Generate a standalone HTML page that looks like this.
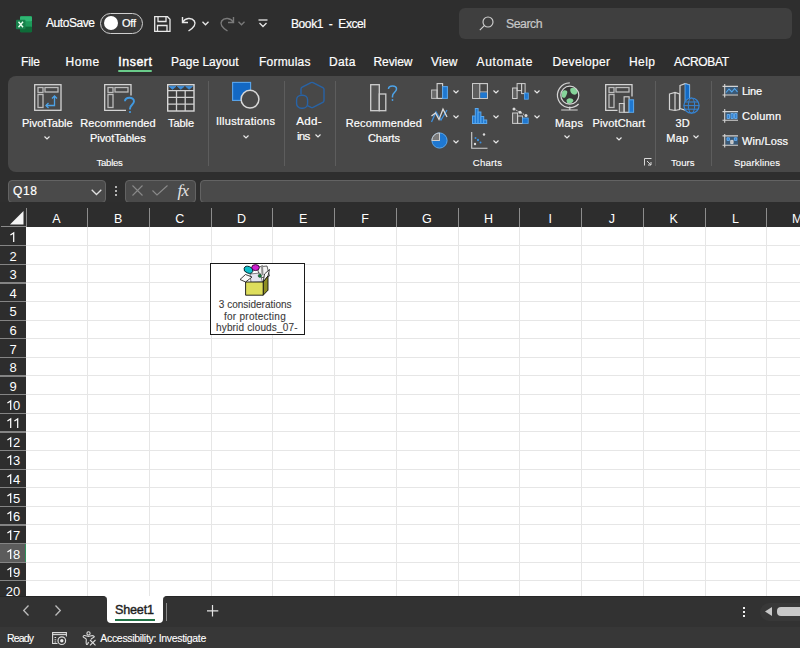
<!DOCTYPE html>
<html><head><meta charset="utf-8">
<style>
*{margin:0;padding:0;box-sizing:border-box}
html,body{width:800px;height:648px;overflow:hidden;background:#2e2e2e;font-family:"Liberation Sans",sans-serif;color:#fff;position:relative}
.a{position:absolute;white-space:nowrap}
svg{position:absolute;overflow:visible}
.rh{left:0;width:26px;font-size:13px;color:#fff;text-align:center}
.rh span{position:absolute;left:0;right:0;top:4px;line-height:13px}
.one{display:inline-block;width:7.2px;height:13px;position:relative;vertical-align:top}
.one svg{position:absolute;left:0;top:0}
.ch{top:212px;font-size:12.5px;line-height:14px;text-align:center;color:#fff}
</style></head><body>

<!-- ===== TITLE BAR ===== -->
<!-- excel logo -->
<svg style="left:16px;top:15.5px" width="17" height="17" viewBox="0 0 17 17">
  <rect x="4" y="0.3" width="12" height="16" rx="1.2" fill="#107c41"/>
  <rect x="4" y="0.3" width="12" height="5.5" rx="1.2" fill="#2fb673"/>
  <rect x="4" y="5.5" width="12" height="5.3" fill="#1d9a5a"/>
  <rect x="4" y="10.8" width="12" height="5.5" rx="1.2" fill="#0e6b38"/>
  <rect x="0" y="3.8" width="9.5" height="9.5" rx="1" fill="#17804a"/>
  <path d="M2.5 5.8 L7 11.3 M7 5.8 L2.5 11.3" stroke="#eafff0" stroke-width="1.4"/>
</svg>
<!-- toggle -->
<div class="a" style="left:100px;top:13px;width:43px;height:20.5px;background:#383838;border:1.4px solid #cfcfcf;border-radius:11px"></div>
<div class="a" style="left:103.7px;top:16.2px;width:14px;height:14px;background:#fff;border-radius:50%"></div>
<!-- save -->
<svg style="left:154px;top:16px" width="17" height="16" viewBox="0 0 17 16" fill="none" stroke="#e8e8e8" stroke-width="1.3">
  <path d="M0.7 0.7 H13.5 L16 3.2 V15.3 H0.7 Z"/>
  <path d="M4 0.7 V5.5 H12 V0.7"/>
  <path d="M3.5 15.3 V9.5 H13 V15.3"/>
</svg>
<!-- undo -->
<svg style="left:181px;top:16px" width="18" height="16" viewBox="0 0 18 16" fill="none" stroke="#e8e8e8" stroke-width="1.4">
  <path d="M1.5 1 V6.5 H7"/>
  <path d="M1.8 6.3 C4 2 10.5 1 13.3 5 C15.3 8 13 11.5 7.5 15"/>
</svg>
<svg style="left:202px;top:21px" width="7" height="5" viewBox="0 0 7 5" fill="none" stroke="#e8e8e8" stroke-width="1.3"><path d="M0.5 0.8 L3.5 3.8 L6.5 0.8"/></svg>
<!-- redo -->
<svg style="left:217px;top:16px" width="18" height="16" viewBox="0 0 18 16" fill="none" stroke="#7a7a7a" stroke-width="1.4">
  <path d="M16.5 1 V6.5 H11"/>
  <path d="M16.2 6.3 C14 2 7.5 1 4.7 5 C2.7 8 5 11.5 10.5 15"/>
</svg>
<svg style="left:238px;top:21px" width="7" height="5" viewBox="0 0 7 5" fill="none" stroke="#7a7a7a" stroke-width="1.3"><path d="M0.5 0.8 L3.5 3.8 L6.5 0.8"/></svg>
<!-- customize qat -->
<svg style="left:258px;top:19px" width="10" height="9" viewBox="0 0 10 9" fill="none" stroke="#e8e8e8" stroke-width="1.3">
  <path d="M0.5 1 H9.5"/><path d="M1.5 4 L5 7.5 L8.5 4"/>
</svg>
<!-- search box -->
<div class="a" style="left:459px;top:8px;width:333px;height:31px;background:#3f3f3f;border-radius:6px"></div>
<svg style="left:479px;top:15.5px" width="15" height="15" viewBox="0 0 15 15" fill="none" stroke="#cfcfcf" stroke-width="1.15">
  <circle cx="9" cy="6" r="5"/><path d="M5.3 9.7 L0.8 14.2"/>
</svg>

<!-- insert underline -->
<div class="a" style="left:118px;top:70px;width:34px;height:2.4px;background:#6acb8a;border-radius:1.2px"></div>

<!-- ===== RIBBON ===== -->
<div class="a" style="left:8px;top:76px;width:830px;height:96px;background:#484848;border-radius:8px"></div>
<div class="a" style="left:208px;top:81px;width:1px;height:85px;background:#5d5d5d"></div>
<div class="a" style="left:283.5px;top:81px;width:1px;height:85px;background:#5d5d5d"></div>
<div class="a" style="left:334.5px;top:81px;width:1px;height:85px;background:#5d5d5d"></div>
<div class="a" style="left:655px;top:81px;width:1px;height:85px;background:#5d5d5d"></div>
<div class="a" style="left:710.5px;top:81px;width:1px;height:85px;background:#5d5d5d"></div>

<!-- PivotTable icon -->
<svg style="left:34px;top:84px" width="28" height="27" viewBox="0 0 28 27" fill="none">
  <rect x="0.7" y="0.7" width="26.3" height="25.6" stroke="#d4d4d4" stroke-width="1.3"/>
  <rect x="4" y="3.5" width="5" height="5" stroke="#bcbcbc" stroke-width="1.3"/>
  <rect x="11" y="3.5" width="13" height="4.5" stroke="#bcbcbc" stroke-width="1.3"/>
  <rect x="4" y="10.5" width="5" height="13" stroke="#bcbcbc" stroke-width="1.3"/>
  <path d="M12 21.5 H20.5 V12" stroke="#4da3e8" stroke-width="1.3"/>
  <path d="M14.5 19 L12 21.5 L14.5 24" stroke="#4da3e8" stroke-width="1.3"/>
  <path d="M18 14.5 L20.5 12 L23 14.5" stroke="#4da3e8" stroke-width="1.3"/>
</svg>
<svg style="left:44px;top:135.5px" width="6" height="4" viewBox="0 0 6 4" fill="none" stroke="#e8e8e8" stroke-width="1.2"><path d="M0.5 0.5 L3 3 L5.5 0.5"/></svg>

<!-- Recommended PivotTables icon -->
<svg style="left:104px;top:84px" width="32" height="30" viewBox="0 0 32 30" fill="none">
  <path d="M22 26.3 H0.7 V0.7 H27 V11.5" stroke="#d4d4d4" stroke-width="1.3"/>
  <rect x="4" y="3.5" width="5" height="5" stroke="#bcbcbc" stroke-width="1.3"/>
  <rect x="11" y="3.5" width="13" height="4.5" stroke="#bcbcbc" stroke-width="1.3"/>
  <rect x="4" y="10.5" width="5" height="13" stroke="#bcbcbc" stroke-width="1.3"/>
  <path d="M21 17.2 C21 12.8 30 12.5 30 17.2 C30 20.5 26 21 26 24.5 V25.5" stroke="#4199e0" stroke-width="1.9"/>
  <circle cx="26" cy="28" r="1.1" fill="#4199e0"/>
</svg>

<!-- Table icon -->
<svg style="left:167px;top:83.5px" width="28" height="28" viewBox="0 0 28 28" fill="none">
  <rect x="0.7" y="0.7" width="26.3" height="26.3" fill="#3c3c3c" stroke="#d8d8d8" stroke-width="1.4"/>
  <path d="M2 2.3 H9 L5.5 5.3 Z M10.3 2.3 H17.3 L13.8 5.3 Z M18.6 2.3 H25.6 L22.1 5.3 Z" fill="#3d8fdc" stroke="#3d8fdc" stroke-width="0.8" stroke-linejoin="round"/>
  <path d="M0.7 6.6 H27 M0.7 13.4 H27 M0.7 20.2 H27 M9.5 6.6 V27 M18.2 6.6 V27" stroke="#d0d0d0" stroke-width="1.3"/>
</svg>

<!-- Illustrations icon -->
<svg style="left:231px;top:81px" width="30" height="30" viewBox="0 0 30 30">
  <rect x="1.6" y="1.4" width="18" height="18" fill="#1368c4" stroke="#5aa6ee" stroke-width="1.1"/>
  <circle cx="19" cy="18.2" r="8.9" fill="#484848" stroke="#d8d8d8" stroke-width="1.5"/>
</svg>
<svg style="left:243px;top:134.5px" width="6" height="4" viewBox="0 0 6 4" fill="none" stroke="#e8e8e8" stroke-width="1.2"><path d="M0.5 0.5 L3 3 L5.5 0.5"/></svg>

<!-- Add-ins icon -->
<svg style="left:294px;top:80px" width="32" height="31" viewBox="0 0 32 31" fill="none" stroke="#2863a6" stroke-width="1.4" stroke-linejoin="round">
  <path d="M7 14.5 V9 Q7 7.8 8.2 7.1 L17 2.6 Q18 2.1 19 2.6 L28.8 7.6 Q30 8.2 30 9.5 V20.5 Q30 21.8 28.8 22.4 L19 27.4 Q18 27.9 17 27.4 L13.5 25.6"/>
  <rect x="2.6" y="15.2" width="11" height="13" rx="4.8"/>
</svg>
<svg style="left:315px;top:134px" width="6" height="4" viewBox="0 0 6 4" fill="none" stroke="#e8e8e8" stroke-width="1.2"><path d="M0.5 0.5 L3 3 L5.5 0.5"/></svg>

<!-- Recommended Charts icon -->
<svg style="left:370px;top:83.5px" width="30" height="28" viewBox="0 0 30 28" fill="none">
  <rect x="0.7" y="0.7" width="8.6" height="26" fill="#555" stroke="#cfcfcf" stroke-width="1.3"/>
  <rect x="9.3" y="10" width="6.5" height="16.7" fill="#484848" stroke="#cfcfcf" stroke-width="1.3"/>
  <path d="M18.5 5 C18.5 1 26.5 1 26.5 5 C26.5 8 22.5 8.5 22.5 12 V13.5" stroke="#4da3e8" stroke-width="1.5"/>
  <circle cx="22.5" cy="16" r="0.9" fill="#4da3e8"/>
</svg>

<!-- small chart icons -->
<!-- column -->
<svg style="left:431px;top:83px" width="17" height="16" viewBox="0 0 17 16" fill="none">
  <rect x="0.6" y="7" width="5.5" height="8.4" fill="#6a6a6a" stroke="#bdbdbd" stroke-width="1"/>
  <rect x="6.1" y="0.6" width="5.5" height="14.8" stroke="#d4d4d4" stroke-width="1.1"/>
  <rect x="11.6" y="3.6" width="4.8" height="11.8" fill="#1f78d1" stroke="#5aa8ee" stroke-width="1"/>
</svg>
<!-- treemap -->
<svg style="left:471.5px;top:83px" width="16" height="16" viewBox="0 0 16 16" fill="none">
  <rect x="0.6" y="0.6" width="14.8" height="14.8" stroke="#cfcfcf" stroke-width="1.1"/>
  <rect x="1.1" y="1.1" width="6.5" height="13.8" fill="#5e5e5e"/>
  <path d="M7.8 0.6 V15.4 M7.8 9 H15.4" stroke="#cfcfcf" stroke-width="1.1"/>
  <rect x="8.3" y="9.5" width="6.6" height="5.4" fill="#1f78d1"/>
</svg>
<!-- waterfall -->
<svg style="left:512px;top:83px" width="17" height="17" viewBox="0 0 17 17" fill="none">
  <rect x="0.6" y="5" width="4.5" height="10.5" fill="#5e5e5e" stroke="#cfcfcf" stroke-width="1"/>
  <rect x="5.1" y="0.6" width="4.5" height="7" stroke="#cfcfcf" stroke-width="1"/>
  <rect x="9.6" y="0.6" width="3.5" height="10" stroke="#cfcfcf" stroke-width="1"/>
  <rect x="12.5" y="10" width="3.8" height="6.2" fill="#1f78d1" stroke="#5aa8ee" stroke-width="0.8"/>
</svg>
<!-- line -->
<svg style="left:431px;top:108px" width="17" height="16" viewBox="0 0 17 16" fill="none">
  <path d="M0.5 14 L5 4 L10 12 L16 2" stroke="#3d8fdc" stroke-width="1.3"/>
  <path d="M0.5 8 L4.5 5 L8 11.5 L12 1 L16 9" stroke="#dcdcdc" stroke-width="1.3"/>
</svg>
<!-- histogram -->
<svg style="left:472px;top:108px" width="16" height="16" viewBox="0 0 16 16" fill="none" stroke="#5aa8ee" stroke-width="1">
  <rect x="0.5" y="8" width="2.8" height="7.5" fill="#1f78d1"/>
  <rect x="3.3" y="0.5" width="2.8" height="15" fill="#1f78d1"/>
  <rect x="6.1" y="4" width="2.8" height="11.5" fill="#1f78d1"/>
  <rect x="8.9" y="8.5" width="2.8" height="7" fill="#1f78d1"/>
  <rect x="11.7" y="12" width="3" height="3.5" fill="#1f78d1"/>
</svg>
<!-- combo -->
<svg style="left:512px;top:107px" width="17" height="17" viewBox="0 0 17 17" fill="none">
  <rect x="0.6" y="6" width="5" height="10.4" fill="#5e5e5e" stroke="#cfcfcf" stroke-width="1"/>
  <rect x="5.6" y="9" width="5" height="7.4" stroke="#cfcfcf" stroke-width="1"/>
  <rect x="10.6" y="11" width="5.6" height="5.4" fill="#1f78d1" stroke="#5aa8ee" stroke-width="0.8"/>
  <path d="M2 2 L14 8.5" stroke="#cfcfcf" stroke-width="1" stroke-dasharray="1.5 1"/>
  <circle cx="2" cy="2" r="1.5" fill="#dcdcdc"/><circle cx="8" cy="5.3" r="1.5" fill="#dcdcdc"/><circle cx="14" cy="8.5" r="1.5" fill="#dcdcdc"/>
</svg>
<!-- pie -->
<svg style="left:431px;top:132px" width="17" height="17" viewBox="0 0 17 17">
  <circle cx="8.5" cy="8.5" r="7.6" fill="#1f78d1" stroke="#5aa8ee" stroke-width="1"/>
  <path d="M8.5 8.5 V0.9 A7.6 7.6 0 0 0 0.9 8.5 Z" fill="#7a7a7a" stroke="#cfcfcf" stroke-width="1"/>
  <path d="M8.5 8.5 V3 M8.5 8.5 H3" stroke="#cfcfcf" stroke-width="1"/>
</svg>
<!-- scatter -->
<svg style="left:471px;top:132px" width="17" height="17" viewBox="0 0 17 17" fill="none">
  <path d="M0.7 0 V16.3 H16.5" stroke="#cfcfcf" stroke-width="1.1"/>
  <circle cx="4" cy="12" r="1.2" fill="#dcdcdc"/>
  <circle cx="7" cy="8" r="1.2" fill="#3d8fdc"/>
  <circle cx="4.5" cy="6" r="1" fill="#3d8fdc"/>
  <circle cx="9.5" cy="10.5" r="1" fill="#3d8fdc"/>
  <circle cx="13" cy="2.5" r="1.2" fill="#dcdcdc"/>
</svg>
<!-- chevrons for small icons -->
<svg style="left:452.5px;top:90px" width="6" height="4" viewBox="0 0 6 4" fill="none" stroke="#e8e8e8" stroke-width="1.2"><path d="M0.5 0.5 L3 3 L5.5 0.5"/></svg>
<svg style="left:493px;top:90px" width="6" height="4" viewBox="0 0 6 4" fill="none" stroke="#e8e8e8" stroke-width="1.2"><path d="M0.5 0.5 L3 3 L5.5 0.5"/></svg>
<svg style="left:533.5px;top:90px" width="6" height="4" viewBox="0 0 6 4" fill="none" stroke="#e8e8e8" stroke-width="1.2"><path d="M0.5 0.5 L3 3 L5.5 0.5"/></svg>
<svg style="left:452.5px;top:115px" width="6" height="4" viewBox="0 0 6 4" fill="none" stroke="#e8e8e8" stroke-width="1.2"><path d="M0.5 0.5 L3 3 L5.5 0.5"/></svg>
<svg style="left:493px;top:115px" width="6" height="4" viewBox="0 0 6 4" fill="none" stroke="#e8e8e8" stroke-width="1.2"><path d="M0.5 0.5 L3 3 L5.5 0.5"/></svg>
<svg style="left:533.5px;top:115px" width="6" height="4" viewBox="0 0 6 4" fill="none" stroke="#e8e8e8" stroke-width="1.2"><path d="M0.5 0.5 L3 3 L5.5 0.5"/></svg>
<svg style="left:452.5px;top:140px" width="6" height="4" viewBox="0 0 6 4" fill="none" stroke="#e8e8e8" stroke-width="1.2"><path d="M0.5 0.5 L3 3 L5.5 0.5"/></svg>
<svg style="left:493px;top:140px" width="6" height="4" viewBox="0 0 6 4" fill="none" stroke="#e8e8e8" stroke-width="1.2"><path d="M0.5 0.5 L3 3 L5.5 0.5"/></svg>

<!-- Maps icon -->
<svg style="left:556px;top:83px" width="26" height="29" viewBox="0 0 26 29" fill="none">
  <circle cx="13.8" cy="12.2" r="8.6" fill="#353535"/>
  <path d="M6 9 C7 7 9.5 6.5 11 8 C12 9.5 10.5 12 9.5 14 C8.5 15.5 6.5 15 5.5 13 Z" fill="#86d49a"/>
  <path d="M14.5 5.5 C17 4 20.5 5 21.5 8.5 C21.5 11 19.5 12 17.5 11.5 C15.5 11 13.5 8.5 14.5 5.5 Z" fill="#86d49a"/>
  <path d="M10.5 17 C12.5 14.5 16.5 15 17.5 17.5 C17 20 14 21 12 20.5 C11 20 10.5 18.5 10.5 17 Z" fill="#86d49a"/>
  <circle cx="13.8" cy="12.2" r="9" stroke="#d4d4d4" stroke-width="1.2"/>
  <path d="M13.8 -0.2 A12.4 12.4 0 1 0 22.6 21" stroke="#d4d4d4" stroke-width="1.2"/>
  <path d="M13.8 23.5 V27 M5.2 27 H21.7" stroke="#d4d4d4" stroke-width="1.2"/>
</svg>
<svg style="left:564px;top:134.5px" width="6" height="4" viewBox="0 0 6 4" fill="none" stroke="#e8e8e8" stroke-width="1.2"><path d="M0.5 0.5 L3 3 L5.5 0.5"/></svg>

<!-- PivotChart icon -->
<svg style="left:605px;top:84px" width="30" height="29" viewBox="0 0 30 29" fill="none">
  <path d="M12.5 26.3 H0.7 V0.7 H27 V12.5" stroke="#d4d4d4" stroke-width="1.3"/>
  <rect x="4" y="3.5" width="5" height="5" stroke="#bcbcbc" stroke-width="1.3"/>
  <rect x="11" y="3.5" width="13" height="4.5" stroke="#bcbcbc" stroke-width="1.3"/>
  <rect x="4" y="10.5" width="5" height="13" stroke="#bcbcbc" stroke-width="1.3"/>
  <rect x="14.3" y="19.5" width="4.8" height="8.8" fill="#5e5e5e" stroke="#cfcfcf" stroke-width="1"/>
  <rect x="19.1" y="12.8" width="5" height="15.5" stroke="#d4d4d4" stroke-width="1.1"/>
  <rect x="24.1" y="15.8" width="4.5" height="12.5" fill="#1f78d1" stroke="#5aa8ee" stroke-width="1"/>
</svg>
<svg style="left:615.5px;top:136.5px" width="6" height="4" viewBox="0 0 6 4" fill="none" stroke="#e8e8e8" stroke-width="1.2"><path d="M0.5 0.5 L3 3 L5.5 0.5"/></svg>
<!-- dialog launcher -->
<svg style="left:644px;top:158px" width="8" height="8" viewBox="0 0 8 8" fill="none" stroke="#d8d8d8" stroke-width="1"><path d="M0.5 7.5 V0.5 H7.5 M3 3 L7 7 M7 4 V7 H4"/></svg>

<!-- 3D Map icon -->
<svg style="left:668px;top:83px" width="33" height="31" viewBox="0 0 33 31" fill="none">
  <path d="M1.5 11 L7 9.5 L11.5 11 V26.5 L7 27.5 L1.5 26.5 Z M7 9.5 V27.5" stroke="#d4d4d4" stroke-width="1.2" fill="#484848"/>
  <path d="M12 2.5 L17 0.7 L21.5 2 V25 L17 27 L12 25.5 Z" stroke="#d4d4d4" stroke-width="1.2" fill="#484848"/>
  <path d="M17 0.7 L21.5 2 V25 L17 27 Z" fill="#136ac4" stroke="#6ab0f0" stroke-width="0.8"/>
  <circle cx="23.5" cy="22.6" r="7.6" fill="#484848" stroke="#3584d4" stroke-width="1.2"/>
  <ellipse cx="23.5" cy="22.6" rx="3.2" ry="7.6" stroke="#3584d4" stroke-width="1"/>
  <path d="M15.9 22.6 H31.1 M17.2 19 H29.8 M17.2 26.2 H29.8" stroke="#3584d4" stroke-width="1"/>
</svg>
<svg style="left:693px;top:135px" width="6" height="4" viewBox="0 0 6 4" fill="none" stroke="#e8e8e8" stroke-width="1.2"><path d="M0.5 0.5 L3 3 L5.5 0.5"/></svg>

<!-- sparkline icons -->
<svg style="left:722px;top:84px" width="17" height="14" viewBox="0 0 17 14" fill="none">
  <rect x="3.5" y="3" width="12.5" height="7.3" fill="#3a5a78"/>
  <path d="M4 8.5 L7 5 L9.8 8 L12.6 4.5 L15.5 8" stroke="#56aaf0" stroke-width="1.1"/>
  <path d="M2.7 0 V13.5 M0.5 2.4 H16 M0.5 11 H16" stroke="#d4d4d4" stroke-width="1.1"/>
</svg>
<svg style="left:722px;top:109px" width="17" height="14" viewBox="0 0 17 14" fill="none">
  <rect x="3.5" y="3.3" width="12.5" height="7" fill="#3a5a78"/>
  <path d="M5.2 5.5 H7.5 V9.5 H5.2 Z M9 4.5 H11.3 V9.5 H9 Z M12.6 4.5 H14.9 V9.5 H12.6 Z" fill="#2f7fd0" stroke="#70b8f8" stroke-width="0.8"/>
  <path d="M2.7 0 V13.8 M0.5 2.6 H16 M0.5 11.2 H16" stroke="#d4d4d4" stroke-width="1.1"/>
</svg>
<svg style="left:722px;top:134.4px" width="17" height="14" viewBox="0 0 17 14" fill="none">
  <rect x="3.5" y="2.8" width="12.5" height="8" fill="#3a5a78"/>
  <path d="M5 3.8 H7.4 V6.4 H5 Z M12.4 3.8 H14.8 V6.4 H12.4 Z" fill="#2f7fd0" stroke="#70b8f8" stroke-width="0.8"/>
  <path d="M8.7 6.4 H11.1 V9.6 H8.7 Z" fill="#bdbdbd" stroke="#e0e0e0" stroke-width="0.8"/>
  <path d="M2.7 0 V13.4 M0.5 1.9 H16 M0.5 11.2 H16" stroke="#d4d4d4" stroke-width="1.1"/>
</svg>

<!-- ===== FORMULA BAR ===== -->
<div class="a" style="left:8px;top:179.5px;width:98px;height:23px;background:#4a4a4a;border:1px solid #636363;border-radius:4px"></div>
<svg style="left:91px;top:188.5px" width="11" height="7" viewBox="0 0 11 7" fill="none" stroke="#e0e0e0" stroke-width="1.3"><path d="M0.7 0.7 L5.5 5.5 L10.3 0.7"/></svg>
<div class="a" style="left:114.5px;top:186px;width:2.2px;height:2.2px;background:#e0e0e0;border-radius:1px"></div>
<div class="a" style="left:114.5px;top:190px;width:2.2px;height:2.2px;background:#e0e0e0;border-radius:1px"></div>
<div class="a" style="left:114.5px;top:194px;width:2.2px;height:2.2px;background:#e0e0e0;border-radius:1px"></div>
<div class="a" style="left:125px;top:179.5px;width:71px;height:23px;background:#4a4a4a;border:1px solid #636363;border-radius:4px"></div>
<svg style="left:132px;top:185px" width="11" height="11" viewBox="0 0 11 11" fill="none" stroke="#8a8a8a" stroke-width="1.1"><path d="M0.5 0.5 L10.5 10.5 M10.5 0.5 L0.5 10.5"/></svg>
<svg style="left:152px;top:185px" width="16" height="11" viewBox="0 0 16 11" fill="none" stroke="#8a8a8a" stroke-width="1.1"><path d="M0.5 5.5 L5 10 L15.5 0.5"/></svg>
<div class="a" style="left:177.5px;top:180.5px;font-family:'Liberation Serif',serif;font-style:italic;font-size:17px;line-height:19px;color:#e4e4e4;letter-spacing:-0.8px">fx</div>
<div class="a" style="left:200px;top:179.5px;width:620px;height:23px;background:#4a4a4a;border:1px solid #636363;border-radius:4px"></div>

<!-- ===== HEADERS ===== -->
<div class="a" style="left:0;top:202px;width:800px;height:25px;background:#2d2d2d"></div>
<svg style="left:10px;top:211.3px" width="14" height="14" viewBox="0 0 14 14"><path d="M13.5 0 V13.5 H0 Z" fill="#f4f4f4"/></svg>
<div class="a" style="left:25.5px;top:207.5px;width:1px;height:19px;background:#8c8c8c"></div>
<div class="a" style="left:1px;top:226px;width:25px;height:1.2px;background:#8a8a8a"></div>
<div class="a" style="left:87.23px;top:207.5px;width:1px;height:19px;background:#8c8c8c"></div>
<div class="a" style="left:148.96px;top:207.5px;width:1px;height:19px;background:#8c8c8c"></div>
<div class="a" style="left:210.69px;top:207.5px;width:1px;height:19px;background:#8c8c8c"></div>
<div class="a" style="left:272.42px;top:207.5px;width:1px;height:19px;background:#8c8c8c"></div>
<div class="a" style="left:334.15px;top:207.5px;width:1px;height:19px;background:#8c8c8c"></div>
<div class="a" style="left:395.88px;top:207.5px;width:1px;height:19px;background:#8c8c8c"></div>
<div class="a" style="left:457.61px;top:207.5px;width:1px;height:19px;background:#8c8c8c"></div>
<div class="a" style="left:519.34px;top:207.5px;width:1px;height:19px;background:#8c8c8c"></div>
<div class="a" style="left:581.07px;top:207.5px;width:1px;height:19px;background:#8c8c8c"></div>
<div class="a" style="left:642.80px;top:207.5px;width:1px;height:19px;background:#8c8c8c"></div>
<div class="a" style="left:704.53px;top:207.5px;width:1px;height:19px;background:#8c8c8c"></div>
<div class="a" style="left:766.26px;top:207.5px;width:1px;height:19px;background:#8c8c8c"></div>
<div class="a ch" style="left:36.36px;width:40px">A</div>
<div class="a ch" style="left:98.09px;width:40px">B</div>
<div class="a ch" style="left:159.82px;width:40px">C</div>
<div class="a ch" style="left:221.56px;width:40px">D</div>
<div class="a ch" style="left:283.28px;width:40px">E</div>
<div class="a ch" style="left:345.01px;width:40px">F</div>
<div class="a ch" style="left:406.75px;width:40px">G</div>
<div class="a ch" style="left:468.47px;width:40px">H</div>
<div class="a ch" style="left:530.20px;width:40px">I</div>
<div class="a ch" style="left:591.93px;width:40px">J</div>
<div class="a ch" style="left:653.66px;width:40px">K</div>
<div class="a ch" style="left:715.39px;width:40px">L</div>
<div class="a ch" style="left:777.12px;width:40px">M</div>

<!-- ===== GRID ===== -->
<div class="a" style="left:0;top:227px;width:26px;height:370px;background:#2d2d2d"></div>
<div class="a" style="left:26px;top:227px;width:774px;height:370px;background:#ffffff"></div>
<div class="a" style="left:87.23px;top:227px;width:1px;height:370px;background:#e6e6e6"></div>
<div class="a" style="left:148.96px;top:227px;width:1px;height:370px;background:#e6e6e6"></div>
<div class="a" style="left:210.69px;top:227px;width:1px;height:370px;background:#e6e6e6"></div>
<div class="a" style="left:272.42px;top:227px;width:1px;height:370px;background:#e6e6e6"></div>
<div class="a" style="left:334.15px;top:227px;width:1px;height:370px;background:#e6e6e6"></div>
<div class="a" style="left:395.88px;top:227px;width:1px;height:370px;background:#e6e6e6"></div>
<div class="a" style="left:457.61px;top:227px;width:1px;height:370px;background:#e6e6e6"></div>
<div class="a" style="left:519.34px;top:227px;width:1px;height:370px;background:#e6e6e6"></div>
<div class="a" style="left:581.07px;top:227px;width:1px;height:370px;background:#e6e6e6"></div>
<div class="a" style="left:642.80px;top:227px;width:1px;height:370px;background:#e6e6e6"></div>
<div class="a" style="left:704.53px;top:227px;width:1px;height:370px;background:#e6e6e6"></div>
<div class="a" style="left:766.26px;top:227px;width:1px;height:370px;background:#e6e6e6"></div>
<div class="a" style="left:26px;top:245.12px;width:774px;height:1px;background:#e6e6e6"></div>
<div class="a" style="left:26px;top:263.74px;width:774px;height:1px;background:#e6e6e6"></div>
<div class="a" style="left:26px;top:282.36px;width:774px;height:1px;background:#e6e6e6"></div>
<div class="a" style="left:26px;top:300.98px;width:774px;height:1px;background:#e6e6e6"></div>
<div class="a" style="left:26px;top:319.60px;width:774px;height:1px;background:#e6e6e6"></div>
<div class="a" style="left:26px;top:338.22px;width:774px;height:1px;background:#e6e6e6"></div>
<div class="a" style="left:26px;top:356.84px;width:774px;height:1px;background:#e6e6e6"></div>
<div class="a" style="left:26px;top:375.46px;width:774px;height:1px;background:#e6e6e6"></div>
<div class="a" style="left:26px;top:394.08px;width:774px;height:1px;background:#e6e6e6"></div>
<div class="a" style="left:26px;top:412.70px;width:774px;height:1px;background:#e6e6e6"></div>
<div class="a" style="left:26px;top:431.32px;width:774px;height:1px;background:#e6e6e6"></div>
<div class="a" style="left:26px;top:449.94px;width:774px;height:1px;background:#e6e6e6"></div>
<div class="a" style="left:26px;top:468.56px;width:774px;height:1px;background:#e6e6e6"></div>
<div class="a" style="left:26px;top:487.18px;width:774px;height:1px;background:#e6e6e6"></div>
<div class="a" style="left:26px;top:505.80px;width:774px;height:1px;background:#e6e6e6"></div>
<div class="a" style="left:26px;top:524.42px;width:774px;height:1px;background:#e6e6e6"></div>
<div class="a" style="left:26px;top:543.04px;width:774px;height:1px;background:#e6e6e6"></div>
<div class="a" style="left:26px;top:561.66px;width:774px;height:1px;background:#e6e6e6"></div>
<div class="a" style="left:26px;top:580.28px;width:774px;height:1px;background:#e6e6e6"></div>
<div class="a rh" style="top:227.00px;height:18.62px;background:transparent"><span><i class="one"><svg width="7.2" height="13" viewBox="0 0 7.2 13"><path d="M1.4 4 L4.7 1.9 V11" fill="none" stroke="#fff" stroke-width="1.25"/></svg></i></span></div>
<div class="a rh" style="top:245.62px;height:18.62px;background:transparent"><span>2</span></div>
<div class="a" style="left:0;top:245.12px;width:26px;height:1.2px;background:#848484"></div>
<div class="a rh" style="top:264.24px;height:18.62px;background:transparent"><span>3</span></div>
<div class="a" style="left:0;top:263.74px;width:26px;height:1.2px;background:#848484"></div>
<div class="a rh" style="top:282.86px;height:18.62px;background:transparent"><span>4</span></div>
<div class="a" style="left:0;top:282.36px;width:26px;height:1.2px;background:#848484"></div>
<div class="a rh" style="top:301.48px;height:18.62px;background:transparent"><span>5</span></div>
<div class="a" style="left:0;top:300.98px;width:26px;height:1.2px;background:#848484"></div>
<div class="a rh" style="top:320.10px;height:18.62px;background:transparent"><span>6</span></div>
<div class="a" style="left:0;top:319.60px;width:26px;height:1.2px;background:#848484"></div>
<div class="a rh" style="top:338.72px;height:18.62px;background:transparent"><span>7</span></div>
<div class="a" style="left:0;top:338.22px;width:26px;height:1.2px;background:#848484"></div>
<div class="a rh" style="top:357.34px;height:18.62px;background:transparent"><span>8</span></div>
<div class="a" style="left:0;top:356.84px;width:26px;height:1.2px;background:#848484"></div>
<div class="a rh" style="top:375.96px;height:18.62px;background:transparent"><span>9</span></div>
<div class="a" style="left:0;top:375.46px;width:26px;height:1.2px;background:#848484"></div>
<div class="a rh" style="top:394.58px;height:18.62px;background:transparent"><span><i class="one"><svg width="7.2" height="13" viewBox="0 0 7.2 13"><path d="M1.4 4 L4.7 1.9 V11" fill="none" stroke="#fff" stroke-width="1.25"/></svg></i>0</span></div>
<div class="a" style="left:0;top:394.08px;width:26px;height:1.2px;background:#848484"></div>
<div class="a rh" style="top:413.20px;height:18.62px;background:transparent"><span><i class="one"><svg width="7.2" height="13" viewBox="0 0 7.2 13"><path d="M1.4 4 L4.7 1.9 V11" fill="none" stroke="#fff" stroke-width="1.25"/></svg></i><i class="one"><svg width="7.2" height="13" viewBox="0 0 7.2 13"><path d="M1.4 4 L4.7 1.9 V11" fill="none" stroke="#fff" stroke-width="1.25"/></svg></i></span></div>
<div class="a" style="left:0;top:412.70px;width:26px;height:1.2px;background:#848484"></div>
<div class="a rh" style="top:431.82px;height:18.62px;background:transparent"><span><i class="one"><svg width="7.2" height="13" viewBox="0 0 7.2 13"><path d="M1.4 4 L4.7 1.9 V11" fill="none" stroke="#fff" stroke-width="1.25"/></svg></i>2</span></div>
<div class="a" style="left:0;top:431.32px;width:26px;height:1.2px;background:#848484"></div>
<div class="a rh" style="top:450.44px;height:18.62px;background:transparent"><span><i class="one"><svg width="7.2" height="13" viewBox="0 0 7.2 13"><path d="M1.4 4 L4.7 1.9 V11" fill="none" stroke="#fff" stroke-width="1.25"/></svg></i>3</span></div>
<div class="a" style="left:0;top:449.94px;width:26px;height:1.2px;background:#848484"></div>
<div class="a rh" style="top:469.06px;height:18.62px;background:transparent"><span><i class="one"><svg width="7.2" height="13" viewBox="0 0 7.2 13"><path d="M1.4 4 L4.7 1.9 V11" fill="none" stroke="#fff" stroke-width="1.25"/></svg></i>4</span></div>
<div class="a" style="left:0;top:468.56px;width:26px;height:1.2px;background:#848484"></div>
<div class="a rh" style="top:487.68px;height:18.62px;background:transparent"><span><i class="one"><svg width="7.2" height="13" viewBox="0 0 7.2 13"><path d="M1.4 4 L4.7 1.9 V11" fill="none" stroke="#fff" stroke-width="1.25"/></svg></i>5</span></div>
<div class="a" style="left:0;top:487.18px;width:26px;height:1.2px;background:#848484"></div>
<div class="a rh" style="top:506.30px;height:18.62px;background:transparent"><span><i class="one"><svg width="7.2" height="13" viewBox="0 0 7.2 13"><path d="M1.4 4 L4.7 1.9 V11" fill="none" stroke="#fff" stroke-width="1.25"/></svg></i>6</span></div>
<div class="a" style="left:0;top:505.80px;width:26px;height:1.2px;background:#848484"></div>
<div class="a rh" style="top:524.92px;height:18.62px;background:transparent"><span><i class="one"><svg width="7.2" height="13" viewBox="0 0 7.2 13"><path d="M1.4 4 L4.7 1.9 V11" fill="none" stroke="#fff" stroke-width="1.25"/></svg></i>7</span></div>
<div class="a" style="left:0;top:524.42px;width:26px;height:1.2px;background:#848484"></div>
<div class="a rh" style="top:543.54px;height:18.62px;background:#5c5c5c"><span><i class="one"><svg width="7.2" height="13" viewBox="0 0 7.2 13"><path d="M1.4 4 L4.7 1.9 V11" fill="none" stroke="#fff" stroke-width="1.25"/></svg></i>8</span></div>
<div class="a" style="left:0;top:543.04px;width:26px;height:1.2px;background:#848484"></div>
<div class="a rh" style="top:562.16px;height:18.62px;background:transparent"><span><i class="one"><svg width="7.2" height="13" viewBox="0 0 7.2 13"><path d="M1.4 4 L4.7 1.9 V11" fill="none" stroke="#fff" stroke-width="1.25"/></svg></i>9</span></div>
<div class="a" style="left:0;top:561.66px;width:26px;height:1.2px;background:#848484"></div>
<div class="a rh" style="top:580.78px;height:18.62px;background:transparent"><span>20</span></div>
<div class="a" style="left:0;top:580.28px;width:26px;height:1.2px;background:#848484"></div>
<div class="a" style="left:25px;top:543.7px;width:1.3px;height:18.6px;background:#2e8f5a"></div>

<!-- embedded object -->
<div class="a" style="left:210px;top:263px;width:95px;height:72px;background:#fff"></div>
<svg style="left:238px;top:262px" width="36" height="36" viewBox="0 0 36 36">
  <path d="M19 5 L29 4 L31.5 14 L22 16 Z" fill="#f4f4f4" stroke="#202020" stroke-width="0.7"/>
  <path d="M23 3.5 L25 3 L25.5 13 L23.5 13.5 Z" fill="#909090"/>
  <path d="M12 12 L22 11 L24.5 20 L13 20.5 Z" fill="#e4e4f0" stroke="#303030" stroke-width="0.6"/>
  <circle cx="21.8" cy="13.8" r="1.6" fill="#108038" stroke="#003010" stroke-width="0.5"/>
  <ellipse cx="10.5" cy="7.8" rx="4.6" ry="3.3" transform="rotate(20 10.5 7.8)" fill="#10c0cc" stroke="#002830" stroke-width="0.9"/>
  <ellipse cx="17.5" cy="5.6" rx="3.8" ry="3" fill="#d020d0" stroke="#300030" stroke-width="0.9"/>
  <path d="M7.6 20 L2 17.5 L7.5 12.5 L14 15 Z" fill="#fafafa" stroke="#101010" stroke-width="0.8"/>
  <path d="M25.2 20 L30 14 L31.5 7.5 L26.5 12 Z" fill="#fafafa" stroke="#101010" stroke-width="0.8"/>
  <path d="M25.2 20 L30 14 L30 28.2 L25.2 33.2 Z" fill="#8e8e22" stroke="#101010" stroke-width="0.9"/>
  <path d="M7.6 20 H25.2 V33.2 H7.6 Z" fill="#dede5c" stroke="#101010" stroke-width="0.9"/>
</svg>
<!-- ===== TAB BAR ===== -->
<div class="a" style="left:0;top:596px;width:800px;height:6px;background:#fff"></div>
<div class="a" style="left:0;top:596px;width:106.5px;height:31px;background:#323232;border-top:1px solid #262626;border-top-right-radius:4px"></div>
<div class="a" style="left:163px;top:596px;width:637px;height:31px;background:#323232;border-top:1px solid #262626;border-top-left-radius:4px"></div>
<div class="a" style="left:106.5px;top:596px;width:56.5px;height:27px;background:#fff;border-radius:0 0 4px 4px"></div>
<div class="a" style="left:106.5px;top:623px;width:56.5px;height:4px;background:#323232"></div>
<div class="a" style="left:115px;top:618.5px;width:40px;height:2px;background:#217346"></div>
<div class="a" style="left:166px;top:602.5px;width:1px;height:18px;background:#8a8a8a"></div>
<svg style="left:23px;top:604.5px" width="6" height="11" viewBox="0 0 6 11" fill="none" stroke="#bcbcbc" stroke-width="1.3"><path d="M5.5 0.5 L0.7 5.5 L5.5 10.5"/></svg>
<svg style="left:55px;top:604.5px" width="6" height="11" viewBox="0 0 6 11" fill="none" stroke="#bcbcbc" stroke-width="1.3"><path d="M0.5 0.5 L5.3 5.5 L0.5 10.5"/></svg>
<svg style="left:207px;top:605px" width="12" height="12" viewBox="0 0 12 12" fill="none" stroke="#e4e4e4" stroke-width="1.2"><path d="M5.5 0 V11.5 M0 5.8 H11.3"/></svg>
<div class="a" style="left:743px;top:607px;width:2.2px;height:2.2px;background:#f0f0f0"></div>
<div class="a" style="left:743px;top:611px;width:2.2px;height:2.2px;background:#f0f0f0"></div>
<div class="a" style="left:743px;top:615px;width:2.2px;height:2.2px;background:#f0f0f0"></div>
<div class="a" style="left:760px;top:603px;width:60px;height:18px;background:#383838;border-radius:9px"></div>
<svg style="left:764.5px;top:606.5px" width="7" height="9" viewBox="0 0 7 9"><path d="M7 0 V9 L0 4.5 Z" fill="#c8c8c8"/></svg>
<div class="a" style="left:776.5px;top:607px;width:40px;height:8.5px;background:#c8c8c8;border-radius:4px"></div>

<!-- ===== STATUS BAR ===== -->
<div class="a" style="left:0;top:627px;width:800px;height:21px;background:#373737"></div>
<svg style="left:52px;top:632px" width="16" height="13" viewBox="0 0 16 13" fill="none" stroke="#dcdcdc" stroke-width="1.1">
  <path d="M5.5 11.5 H0.6 V0.6 H14.4 V4.5"/>
  <path d="M0.6 2.6 H14.4"/>
  <path d="M2.5 5.5 H4.2 M2.5 7.8 H4.2 M2.5 10 H4.2" stroke-width="1"/>
  <circle cx="9.8" cy="8.7" r="3.8" fill="#373737" stroke-width="1.2"/>
  <circle cx="9.8" cy="8.7" r="1.7" fill="#e8e8e8" stroke="none"/>
</svg>
<svg style="left:82px;top:630px" width="15" height="16" viewBox="0 0 15 16" fill="none" stroke="#dcdcdc" stroke-width="1.1">
  <circle cx="6.5" cy="3.4" r="1.6"/>
  <path d="M1 6.8 C1.5 4.5 4 6 6.5 6.4 C9 6 11.5 4.5 12.3 6.8 C11.5 8.2 9.5 8 9 9.5"/>
  <path d="M1 6.8 C2 8.3 4 8 4.3 9.5 C4.5 11 3.5 13 4.5 14.3 C5.3 15 6 13.5 6.5 12"/>
  <path d="M8 10 L13.5 15.3 M13.5 10 L8 15.3"/>
</svg>

<!-- ===== TEXT ===== -->
<div class="a" style="left:46.00px;top:17.44px;font-size:12px;line-height:12px;font-weight:400;color:#ffffff;letter-spacing:-0.435px;-webkit-text-stroke:0.2px #ffffff">AutoSave</div>
<div class="a" style="left:122.00px;top:17.89px;font-size:11px;line-height:11px;font-weight:400;color:#ffffff;letter-spacing:-0.242px;-webkit-text-stroke:0.2px #ffffff">Off</div>
<div class="a" style="left:291.00px;top:17.84px;font-size:12px;line-height:12px;font-weight:400;color:#ffffff;letter-spacing:-0.407px;-webkit-text-stroke:0.2px #ffffff">Book1&#160;&#160;-&#160;&#160;Excel</div>
<div class="a" style="left:506.00px;top:18.19px;font-size:12.3px;line-height:12.3px;font-weight:400;color:#c8c8c8;letter-spacing:-0.494px;-webkit-text-stroke:0.2px #c8c8c8">Search</div>
<div class="a" style="left:21.00px;top:55.84px;font-size:12px;line-height:12px;font-weight:400;color:#ffffff;letter-spacing:-0.115px;-webkit-text-stroke:0.2px #ffffff">File</div>
<div class="a" style="left:65.50px;top:55.84px;font-size:12px;line-height:12px;font-weight:400;color:#ffffff;letter-spacing:0.578px;-webkit-text-stroke:0.2px #ffffff">Home</div>
<div class="a" style="left:171.00px;top:55.84px;font-size:12px;line-height:12px;font-weight:400;color:#ffffff;letter-spacing:0.011px;-webkit-text-stroke:0.2px #ffffff">Page&#160;Layout</div>
<div class="a" style="left:259.00px;top:55.84px;font-size:12px;line-height:12px;font-weight:400;color:#ffffff;letter-spacing:0.212px;-webkit-text-stroke:0.2px #ffffff">Formulas</div>
<div class="a" style="left:329.00px;top:55.84px;font-size:12px;line-height:12px;font-weight:400;color:#ffffff;letter-spacing:0.380px;-webkit-text-stroke:0.2px #ffffff">Data</div>
<div class="a" style="left:373.50px;top:55.84px;font-size:12px;line-height:12px;font-weight:400;color:#ffffff;letter-spacing:-0.072px;-webkit-text-stroke:0.2px #ffffff">Review</div>
<div class="a" style="left:431.00px;top:55.84px;font-size:12px;line-height:12px;font-weight:400;color:#ffffff;letter-spacing:0.234px;-webkit-text-stroke:0.2px #ffffff">View</div>
<div class="a" style="left:476.50px;top:55.84px;font-size:12px;line-height:12px;font-weight:400;color:#ffffff;letter-spacing:0.661px;-webkit-text-stroke:0.2px #ffffff">Automate</div>
<div class="a" style="left:552.50px;top:55.84px;font-size:12px;line-height:12px;font-weight:400;color:#ffffff;letter-spacing:0.350px;-webkit-text-stroke:0.2px #ffffff">Developer</div>
<div class="a" style="left:629.00px;top:55.84px;font-size:12px;line-height:12px;font-weight:400;color:#ffffff;letter-spacing:0.438px;-webkit-text-stroke:0.2px #ffffff">Help</div>
<div class="a" style="left:674.00px;top:55.84px;font-size:12px;line-height:12px;font-weight:400;color:#ffffff;letter-spacing:-0.354px;-webkit-text-stroke:0.2px #ffffff">ACROBAT</div>
<div class="a" style="left:118.30px;top:56.09px;font-size:12.3px;line-height:12.3px;font-weight:400;color:#ffffff;letter-spacing:0.567px;-webkit-text-stroke:0.45px #fff">Insert</div>
<div class="a" style="left:22.00px;top:117.59px;font-size:11px;line-height:11px;font-weight:400;color:#ffffff;letter-spacing:-0.018px;-webkit-text-stroke:0.2px #ffffff">PivotTable</div>
<div class="a" style="left:80.25px;top:117.59px;font-size:11px;line-height:11px;font-weight:400;color:#ffffff;letter-spacing:0.081px;-webkit-text-stroke:0.2px #ffffff">Recommended</div>
<div class="a" style="left:90.00px;top:132.59px;font-size:11px;line-height:11px;font-weight:400;color:#ffffff;letter-spacing:-0.057px;-webkit-text-stroke:0.2px #ffffff">PivotTables</div>
<div class="a" style="left:168.00px;top:117.59px;font-size:11px;line-height:11px;font-weight:400;color:#ffffff;letter-spacing:-0.074px;-webkit-text-stroke:0.2px #ffffff">Table</div>
<div class="a" style="left:216.00px;top:115.69px;font-size:11px;line-height:11px;font-weight:400;color:#ffffff;letter-spacing:0.280px;-webkit-text-stroke:0.2px #ffffff">Illustrations</div>
<div class="a" style="left:296.20px;top:115.18px;font-size:11.6px;line-height:11.6px;font-weight:400;color:#ffffff;letter-spacing:0.333px;-webkit-text-stroke:0.2px #ffffff">Add-</div>
<div class="a" style="left:297.00px;top:130.18px;font-size:11.6px;line-height:11.6px;font-weight:400;color:#ffffff;letter-spacing:-0.814px;-webkit-text-stroke:0.2px #ffffff">ins</div>
<div class="a" style="left:345.70px;top:117.59px;font-size:11px;line-height:11px;font-weight:400;color:#ffffff;letter-spacing:0.171px;-webkit-text-stroke:0.2px #ffffff">Recommended</div>
<div class="a" style="left:368.00px;top:132.59px;font-size:11px;line-height:11px;font-weight:400;color:#ffffff;letter-spacing:-0.081px;-webkit-text-stroke:0.2px #ffffff">Charts</div>
<div class="a" style="left:555.00px;top:117.59px;font-size:11px;line-height:11px;font-weight:400;color:#ffffff;letter-spacing:0.365px;-webkit-text-stroke:0.2px #ffffff">Maps</div>
<div class="a" style="left:592.60px;top:117.59px;font-size:11px;line-height:11px;font-weight:400;color:#ffffff;letter-spacing:0.116px;-webkit-text-stroke:0.2px #ffffff">PivotChart</div>
<div class="a" style="left:675.50px;top:117.59px;font-size:11px;line-height:11px;font-weight:400;color:#ffffff;letter-spacing:0.188px;-webkit-text-stroke:0.2px #ffffff">3D</div>
<div class="a" style="left:666.30px;top:133.19px;font-size:11px;line-height:11px;font-weight:400;color:#ffffff;letter-spacing:0.297px;-webkit-text-stroke:0.2px #ffffff">Map</div>
<div class="a" style="left:742.00px;top:86.44px;font-size:11px;line-height:11px;font-weight:400;color:#ffffff;letter-spacing:-0.266px;-webkit-text-stroke:0.2px #ffffff">Line</div>
<div class="a" style="left:742.00px;top:111.44px;font-size:11px;line-height:11px;font-weight:400;color:#ffffff;letter-spacing:0.219px;-webkit-text-stroke:0.2px #ffffff">Column</div>
<div class="a" style="left:742.00px;top:136.19px;font-size:11px;line-height:11px;font-weight:400;color:#ffffff;letter-spacing:0.107px;-webkit-text-stroke:0.2px #ffffff">Win/Loss</div>
<div class="a" style="left:96.60px;top:157.77px;font-size:9.6px;line-height:9.6px;font-weight:400;color:#ffffff;letter-spacing:-0.307px;-webkit-text-stroke:0.1px #ffffff">Tables</div>
<div class="a" style="left:472.80px;top:157.77px;font-size:9.6px;line-height:9.6px;font-weight:400;color:#ffffff;letter-spacing:0.187px;-webkit-text-stroke:0.1px #ffffff">Charts</div>
<div class="a" style="left:671.00px;top:157.77px;font-size:9.6px;line-height:9.6px;font-weight:400;color:#ffffff;letter-spacing:0.008px;-webkit-text-stroke:0.1px #ffffff">Tours</div>
<div class="a" style="left:734.00px;top:157.77px;font-size:9.6px;line-height:9.6px;font-weight:400;color:#ffffff;letter-spacing:0.134px;-webkit-text-stroke:0.1px #ffffff">Sparklines</div>
<div class="a" style="left:13.00px;top:184.84px;font-size:12px;line-height:12px;font-weight:400;color:#ffffff;letter-spacing:0.656px;-webkit-text-stroke:0.2px #ffffff">Q18</div>
<div class="a" style="left:218.80px;top:299.74px;font-size:10px;line-height:10px;font-weight:400;color:#3a3a3a;letter-spacing:-0.002px;-webkit-text-stroke:0.1px #3a3a3a">3&#160;considerations</div>
<div class="a" style="left:224.00px;top:311.54px;font-size:10px;line-height:10px;font-weight:400;color:#3a3a3a;letter-spacing:0.256px;-webkit-text-stroke:0.1px #3a3a3a">for&#160;protecting</div>
<div class="a" style="left:216.00px;top:323.34px;font-size:10px;line-height:10px;font-weight:400;color:#3a3a3a;letter-spacing:0.160px;-webkit-text-stroke:0.1px #3a3a3a">hybrid&#160;clouds_07-</div>
<div class="a" style="left:7.00px;top:633.11px;font-size:10.5px;line-height:10.5px;font-weight:400;color:#ffffff;letter-spacing:-0.840px;-webkit-text-stroke:0.1px #ffffff">Ready</div>
<div class="a" style="left:100.30px;top:633.11px;font-size:10.5px;line-height:10.5px;font-weight:400;color:#ffffff;letter-spacing:-0.312px;-webkit-text-stroke:0.1px #ffffff">Accessibility:&#160;Investigate</div>
<div class="a" style="left:115.00px;top:603.83px;font-size:12.6px;line-height:12.6px;font-weight:400;color:#1e1e1e;letter-spacing:-0.184px;-webkit-text-stroke:0.4px #1e1e1e">Sheet1</div>
<div class="a" style="left:210px;top:263px;width:95px;height:72px;border:1.5px solid #1a1a1a"></div>

</body></html>
